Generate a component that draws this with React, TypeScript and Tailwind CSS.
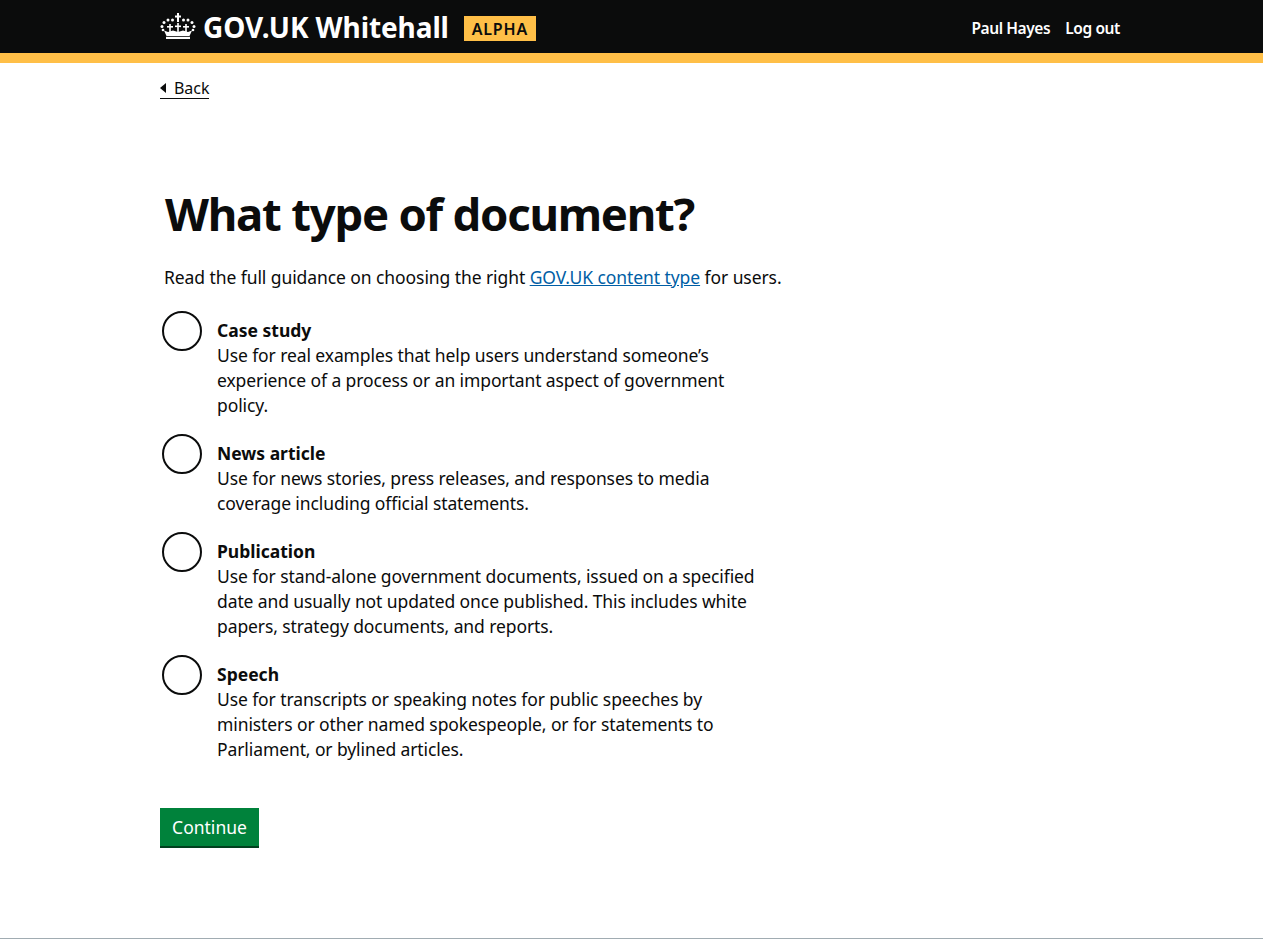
const options = [
  {
    label: "Case study",
    lines: [
      "Use for real examples that help users understand someone’s",
      "experience of a process or an important aspect of government",
      "policy.",
    ],
  },
  {
    label: "News article",
    lines: [
      "Use for news stories, press releases, and responses to media",
      "coverage including official statements.",
    ],
  },
  {
    label: "Publication",
    lines: [
      "Use for stand-alone government documents, issued on a specified",
      "date and usually not updated once published. This includes white",
      "papers, strategy documents, and reports.",
    ],
  },
  {
    label: "Speech",
    lines: [
      "Use for transcripts or speaking notes for public speeches by",
      "ministers or other named spokespeople, or for statements to",
      "Parliament, or bylined articles.",
    ],
  },
];

const Crown = () => (
  <svg width="36" height="27" viewBox="0 0 36 27" fill="#fff" className="mt-[-1px] shrink-0">
    {/* top cross */}
    <rect x="17" y="0" width="2" height="9" />
    <rect x="15" y="2.5" width="6" height="2" />
    {/* pearls */}
    <circle cx="8" cy="7" r="1.5" />
    <circle cx="12.5" cy="7" r="1.5" />
    <circle cx="23.5" cy="7" r="1.5" />
    <circle cx="28" cy="7" r="1.5" />
    <circle cx="4" cy="9.5" r="1.5" />
    <circle cx="32" cy="9.5" r="1.5" />
    <circle cx="2" cy="13.5" r="1.5" />
    <circle cx="34" cy="13.5" r="1.5" />
    <circle cx="3" cy="17" r="1.3" />
    <circle cx="33" cy="17" r="1.3" />
    {/* crosses on the band */}
    <rect x="17.2" y="10" width="1.6" height="10" />
    <rect x="15" y="12.5" width="6" height="1.6" />
    <rect x="9.2" y="11" width="1.6" height="9" />
    <rect x="7" y="13" width="6" height="1.6" />
    <rect x="25.2" y="11" width="1.6" height="9" />
    <rect x="23" y="13" width="6" height="1.6" />
    {/* body */}
    <path d="M4 17.5l4 1.5 5-1.5 5 1.5 5-1.5 5 1.5 4-1.5-2.5 5.5H6.500z" />
    <rect x="6" y="23.800" width="24" height="2.200" />
  </svg>
);

export default function App() {
  return (
    <div className="flex min-h-[939px] flex-col bg-white font-['Noto_Sans',sans-serif] text-[#0b0c0c]">
      <header className="h-[63px] border-b-[10px] border-[#ffbf47] bg-[#0b0c0c]">
        <div className="ml-[160px] flex h-[53px] w-[960px] items-center justify-between">
          <div className="flex items-center">
            <Crown />
            <span className="ml-[7px] text-[28px] font-bold leading-none tracking-[-0.1px] text-white">GOV.UK Whitehall</span>
            <span className="ml-[15px] mt-[3px] flex h-[25px] w-[72px] items-center justify-center bg-[#ffbf47] pt-[2px] text-[16px] font-semibold tracking-[0.8px]">ALPHA</span>
          </div>
          <nav className="mt-[4px] flex gap-[15px] text-[15.5px] font-semibold tracking-[-0.4px] text-white">
            <a>Paul Hayes</a>
            <a>Log out</a>
          </nav>
        </div>
      </header>

      <main className="ml-[160px] w-[960px] grow">
        <a className="mt-[15px] flex w-fit items-center border-b border-[#0b0c0c] text-[16px] leading-[20px] tracking-[-0.05px]">
          <span className="mr-[8px] h-0 w-0 border-y-[5px] border-r-[6px] border-y-transparent border-r-[#0b0c0c]" />
          Back
        </a>

        <div className="pl-[5px]">
          <h1 className="mt-[87px] text-[45.5px] font-bold leading-[54px] tracking-[-1.25px]">What type of document?</h1>
          <p className="mt-[25px] -ml-px text-[17.5px] leading-[25px] tracking-[-0.08px]">
            Read the full guidance on choosing the right{" "}
            <a className="text-[#005ea5] underline">GOV.UK content type</a> for users.
          </p>
        </div>

        <div className="mt-[21px] flex flex-col gap-[16px] pl-[2px]">
          {options.map((o) => (
            <label key={o.label} className="flex">
              <span className="h-[40px] w-[40px] shrink-0 rounded-full border-2 border-[#0b0c0c]" />
              <span className="ml-[15px] pt-[7px] text-[17.5px] leading-[25px] tracking-[-0.1px]">
                <span className="block font-bold tracking-[0px]">{o.label}</span>
                {o.lines.map((l) => (
                  <span key={l} className="block whitespace-nowrap">{l}</span>
                ))}
              </span>
            </label>
          ))}
        </div>

        <button className="mt-[46px] block h-[40px] w-[99px] border-b-2 border-[#00401e] bg-[#00823b] text-[17.5px] text-white">Continue</button>
      </main>

      <footer className="h-px bg-[#a1acb2]" />
    </div>
  );
}
